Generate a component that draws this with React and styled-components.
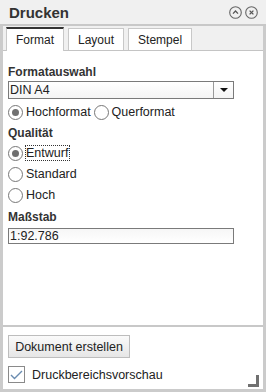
import React, { useState } from 'react'
import styled, { createGlobalStyle } from 'styled-components'

const Global = createGlobalStyle`
  html, body { margin: 0; padding: 0; background: #fff; }
  body { font-family: "Liberation Sans", Arial, sans-serif; font-size: 12px; color: #222; }
`

const Win = styled.div`
  width: 266px;
  height: 392px;
  box-sizing: border-box;
  border: 3px solid #cbcbcb;
  border-top: none;
  display: flex;
  flex-direction: column;
  background: #fff;
`

const Header = styled.div`
  height: 26px;
  flex: none;
  background: #f0f0f0;
  border-bottom: 2px solid #c8c8c8;
  display: flex;
  align-items: center;
  justify-content: space-between;
  padding: 0 8px 0 9px;
  margin: 0 -3px;
  box-sizing: border-box;
  h1 {
    margin: 0;
    font-size: 15px;
    font-weight: bold;
    color: #333;
  }
`

const Icons = styled.div`
  display: flex;
  gap: 3px;
  margin-top: 1px;
`

const TabBar = styled.div`
  height: 24px;
  flex: none;
  background: #f0f0f0;
  display: flex;
  align-items: flex-end;
  gap: 4px;
  padding-left: 3px;
  border-bottom: 1px solid #c4c4c4;
`

const Tab = styled.div`
  box-sizing: border-box;
  border: 1px solid #c8c8c8;
  border-bottom: none;
  border-top: ${p => (p.active ? '2px solid #333' : '1px solid #c8c8c8')};
  background: #fff;
  padding: 0 ${p => p.pad}px;
  display: flex;
  align-items: center;
  font-size: 12px;
  color: #222;
  margin-bottom: ${p => (p.active ? '-1px' : '0')};
  height: ${p => (p.active ? '24px' : '22px')};
`

const Content = styled.div`
  flex: 1;
  border-bottom: 2px solid #c8c8c8;
  padding: 14px 5px 0 5px;
  display: flex;
  flex-direction: column;
`

const Label = styled.div`
  font-weight: bold;
  color: #333;
  font-size: 12px;
  height: 15px;
  line-height: 15px;
  margin-top: ${p => p.mt || 0}px;
`

const Select = styled.div`
  margin-top: 1px;
  width: 226px;
  height: 18px;
  box-sizing: border-box;
  border: 1px solid #7a7a7a;
  display: flex;
  background: linear-gradient(#fff, #f4f4f4);
  span {
    flex: 1;
    padding-left: 1px;
    line-height: 16px;
    font-size: 12.5px;
  }
`

const Arrow = styled.div`
  width: 19px;
  border-left: 1px solid #9a9a9a;
  display: flex;
  align-items: center;
  justify-content: center;
  &::after {
    content: '';
    border-left: 4px solid transparent;
    border-right: 4px solid transparent;
    border-top: 4px solid #111;
  }
`

const RadioRow = styled.div`
  display: flex;
  align-items: center;
  margin-top: ${p => p.mt || 0}px;
`

const RadioItem = styled.label`
  display: flex;
  align-items: center;
  gap: 3px;
  font-size: 12.5px;
  color: #222;
  height: 20px;
  margin-right: 2px;
`

const Circle = styled.span`
  width: 15px;
  height: 15px;
  box-sizing: border-box;
  border-radius: 50%;
  border: 1px solid #777;
  background: #fff;
  display: flex;
  align-items: center;
  justify-content: center;
  &::after {
    content: '';
    width: 7px;
    height: 7px;
    border-radius: 50%;
    background: ${p => (p.checked ? '#707070' : 'transparent')};
  }
`

const Text = styled.span`
  outline: ${p => (p.focus ? '1px dotted #333' : 'none')};
  padding: 0 1px 0 0;
  line-height: 14px;
`

const Input = styled.input`
  margin-top: 3px;
  width: 226px;
  height: 16px;
  box-sizing: border-box;
  border: 1px solid #7a7a7a;
  padding: 0 1px;
  font-family: "Liberation Sans", Arial, sans-serif;
  font-size: 12.5px;
  color: #222;
  background: linear-gradient(#f6f6f6, #fff);
  outline: none;
`

const Footer = styled.div`
  flex: none;
  height: 62px;
  padding: 8px 5px 0 5px;
  position: relative;
  box-sizing: border-box;
`

const Button = styled.button`
  height: 23px;
  width: 122px;
  border: 1px solid #bdbdbd;
  background: linear-gradient(#fafafa, #e6e6e6);
  font-family: "Liberation Sans", Arial, sans-serif;
  font-size: 12.5px;
  color: #222;
  padding: 0;
  border-radius: 0;
`

const CheckRow = styled.label`
  display: flex;
  align-items: center;
  gap: 7px;
  margin-top: 8px;
  font-size: 12.5px;
  color: #222;
`

const Box = styled.span`
  width: 17px;
  height: 17px;
  box-sizing: border-box;
  border: 1px solid #8a8a8a;
  background: #fff;
  display: flex;
  align-items: center;
  justify-content: center;
`

const Grip = styled.div`
  position: absolute;
  right: 4px;
  bottom: 2px;
  width: 11px;
  height: 12px;
  border-right: 3px solid #707070;
  border-bottom: 3px solid #707070;
  box-sizing: border-box;
`

const RoundIcon = ({ kind }) => (
  <svg width="13" height="13" viewBox="0 0 13 13">
    <circle cx="6.5" cy="6.5" r="5.8" fill="none" stroke="#666" strokeWidth="1.1" />
    {kind === 'up' ? (
      <path d="M4 7.6 L6.5 5 L9 7.6" fill="none" stroke="#555" strokeWidth="1.3" />
    ) : (
      <path d="M4.6 4.6 L8.4 8.4 M8.4 4.6 L4.6 8.4" fill="none" stroke="#555" strokeWidth="1.3" />
    )}
  </svg>
)

function Radio({ checked, focus, children }) {
  return (
    <RadioItem>
      <Circle checked={checked} />
      <Text focus={focus}>{children}</Text>
    </RadioItem>
  )
}

export default function App() {
  const [scale, setScale] = useState('1:92.786')
  return (
    <>
      <Global />
      <Win>
        <Header>
          <h1>Drucken</h1>
          <Icons>
            <RoundIcon kind="up" />
            <RoundIcon kind="x" />
          </Icons>
        </Header>
        <TabBar>
          <Tab active pad={9}>Format</Tab>
          <Tab pad={9}>Layout</Tab>
          <Tab pad={9}>Stempel</Tab>
        </TabBar>
        <Content>
          <Label>Formatauswahl</Label>
          <Select>
            <span>DIN A4</span>
            <Arrow />
          </Select>
          <RadioRow mt={3}>
            <Radio checked>Hochformat</Radio>
            <Radio>Querformat</Radio>
          </RadioRow>
          <Label mt={4}>Qualität</Label>
          <RadioRow mt={2}><Radio checked focus>Entwurf</Radio></RadioRow>
          <RadioRow mt={1}><Radio>Standard</Radio></RadioRow>
          <RadioRow mt={1}><Radio>Hoch</Radio></RadioRow>
          <Label mt={5}>Maßstab</Label>
          <Input value={scale} onChange={e => setScale(e.target.value)} />
        </Content>
        <Footer>
          <Button>Dokument erstellen</Button>
          <CheckRow>
            <Box>
              <svg width="13" height="11" viewBox="0 0 13 11">
                <path d="M1 6 L4.5 9.5 L12 2" fill="none" stroke="#6a8cb0" strokeWidth="1.4" />
              </svg>
            </Box>
            Druckbereichsvorschau
          </CheckRow>
          <Grip />
        </Footer>
      </Win>
    </>
  )
}
